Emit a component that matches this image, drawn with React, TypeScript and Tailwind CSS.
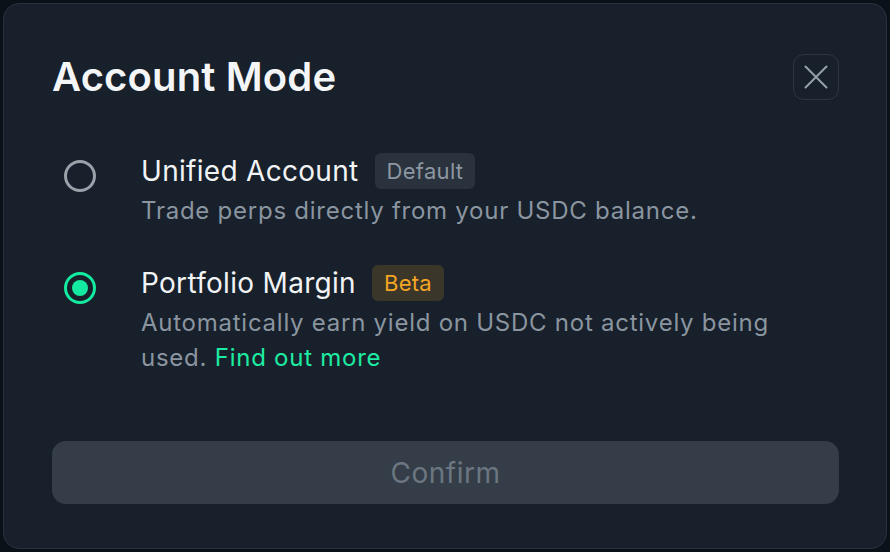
interface OptionProps {
    title: string;
    badge: string;
    badgeClass: string;
    selected?: boolean;
    children: React.ReactNode;
}

function Option({ title, badge, badgeClass, selected = false, children }: OptionProps) {
    return (
        <div className="flex items-start pl-3">
            <div className="mt-[7px] flex-shrink-0">
                {selected ? (
                    <div className="flex h-8 w-8 items-center justify-center rounded-full border-[3px] border-[#13eba0]">
                        <div className="h-4 w-4 rounded-full bg-[#13eba0]" />
                    </div>
                ) : (
                    <div className="h-8 w-8 rounded-full border-[3px] border-[#99a1a9]" />
                )}
            </div>
            <div className="ml-[45px] flex-1">
                <div className="flex items-center">
                    <span className="text-[28px] leading-[36px] tracking-[0.3px] text-[#f1f3f5]">{title}</span>
                    <span className={`ml-4 h-9 rounded-md px-3 text-[22px] leading-9 tracking-[0.3px] ${badgeClass}`}>
                        {badge}
                    </span>
                </div>
                <p className="mt-1 text-[24px] leading-[35px] tracking-[0.75px] text-[#8a95a0]">
                    {children}
                </p>
            </div>
        </div>
    );
}

export default function App() {
    return (
        <div className="h-[552px] w-full bg-[#0b1118] p-[3px]" style={{ fontFamily: 'Inter, "Noto Sans", sans-serif' }}>
            <div className="flex h-full flex-col rounded-2xl border border-[#28313c] bg-[#17202b] pl-12 pr-[47px] pt-[50px]">
                <div className="flex items-center justify-between">
                    <h1 className="text-[40px] font-semibold leading-[46px] tracking-[0.15px] text-[#f3f5f7]">Account Mode</h1>
                    <button className="flex h-[46px] w-[46px] items-center justify-center rounded-[11px] border border-[#2c3541]">
                        <svg width="24" height="24" viewBox="0 0 24 24" fill="none" stroke="#97a0aa" strokeWidth="2" strokeLinecap="round">
                            <path d="M1.5 1.5 22.5 22.5" />
                            <path d="M22.5 1.5 1.5 22.5" />
                        </svg>
                    </button>
                </div>

                <div className="mt-[53px] flex flex-col gap-[37px]">
                    <Option title="Unified Account" badge="Default" badgeClass="bg-[#29323d] text-[#8d97a1]">
                        Trade perps directly from your USDC balance.
                    </Option>
                    <Option title="Portfolio Margin" badge="Beta" badgeClass="bg-[#3a3629] text-[#f5a524]" selected>
                        Automatically earn yield on USDC not actively being used.{' '}
                        <span className="text-[#1eeba2]">Find out more</span>
                    </Option>
                </div>

                <button className="mt-[66px] h-[63px] w-full rounded-[14px] bg-[#343d48] text-[28px] tracking-[0.5px] text-[#6c7681]">
                    Confirm
                </button>
            </div>
        </div>
    );
}
